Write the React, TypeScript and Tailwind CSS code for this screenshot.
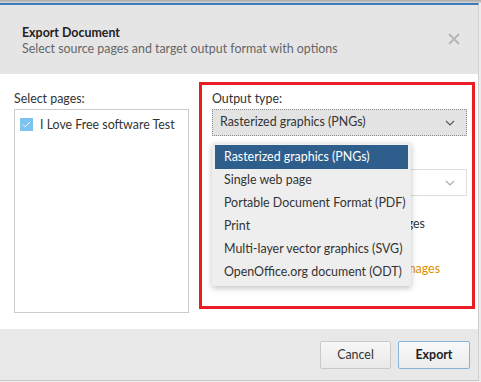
import React from 'react';

const font = { fontFamily: 'Lato, "Noto Sans", sans-serif' };

const formats = [
  'Rasterized graphics (PNGs)',
  'Single web page',
  'Portable Document Format (PDF)',
  'Print',
  'Multi-layer vector graphics (SVG)',
  'OpenOffice.org document (ODT)',
];

const Chevron: React.FC<{ color?: string }> = ({ color = '#555' }) => (
  <svg width="10" height="6" viewBox="0 0 10 6" fill="none">
    <path d="M1 1l4 4 4-4" stroke={color} strokeWidth="1.1" />
  </svg>
);

export default function App() {
  return (
    <div
      className="w-[481px] h-[382px] relative overflow-hidden bg-[#ececec] text-[12.4px] text-[#333] whitespace-nowrap"
      style={font}
    >
      {/* top shadow */}
      <div className="h-[3px] bg-gradient-to-b from-[#a9a9a9] to-[#d4d4d4]" />

      <div className="w-[479px] flex flex-col border-t-2 border-[#3c7bbd] border-r border-r-[#cfcfcf]">
        {/* Header */}
        <div className="h-[69px] bg-[#e5e5e5] flex items-start justify-between pl-[22px] pr-[18px] pt-[20px]">
          <div className="leading-[16px]">
            <div className="font-bold text-[#222]">Export Document</div>
            <div className="text-[#666]">Select source pages and target output format with options</div>
          </div>
          <svg width="12" height="12" viewBox="0 0 12 12" className="mt-[8px]">
            <path d="M1 1l10 10M11 1L1 11" stroke="#b5b5b5" strokeWidth="1.8" />
          </svg>
        </div>

        {/* Body */}
        <div className="h-[255px] bg-white flex pl-[14px] pt-[8px]">
          <div className="w-[175px] flex flex-col pt-[8px]">
            <div className="leading-[17px] mb-[2px]">Select pages:</div>
            <div className="h-[204px] border border-[#cccccc] px-[5px] pt-[6px]">
              <div className="flex items-center gap-[7px] leading-[17px]">
                <span className="w-[13px] h-[13px] bg-[#7ac4ef] flex items-center justify-center">
                  <svg width="9" height="7" viewBox="0 0 9 7">
                    <path d="M1 3.5l2.3 2.3L8 1" stroke="#fff" strokeWidth="1" fill="none" />
                  </svg>
                </span>
                <span>I Love Free software Test</span>
              </div>
            </div>
          </div>

          <div className="ml-[10px] w-[276px] h-[227px] border-[3px] border-[#ea1c24] pl-[10px] pr-[5px] pt-[5px] flex flex-col">
            <div className="leading-[17px] mb-[2px]">Output type:</div>
            <div className="h-[27px] bg-[#e3e3e3] border border-dotted border-[#8a8a8a] flex items-center justify-between pl-[7px] pr-[11px]">
              <span>Rasterized graphics (PNGs)</span>
              <Chevron />
            </div>
            <div className="leading-[17px] mt-[12px] mb-[4px] text-[#333]">Options:</div>
            <div className="h-[27px] bg-white border border-[#e0e0e0] flex items-center justify-end pr-[11px]">
              <Chevron color="#aaa" />
            </div>
            <div className="mt-[19px] w-[213px] flex items-center justify-end gap-[7px] leading-[17px]">
              <span className="w-[13px] h-[13px] border border-[#999]" />
              <span>Use separate pages as images</span>
            </div>
            <div className="mt-[28px] w-[228px] flex justify-end leading-[17px] text-[#e08e00]">
              Options for rendered images
            </div>
          </div>
        </div>

        {/* Footer */}
        <div className="h-[52px] bg-[#e8e8e8] border-b border-[#c8c8c8] flex items-start justify-end gap-[7px] pr-[8px] pt-[12px]">
          <button className="w-[71px] h-[28px] bg-gradient-to-b from-[#f7f7f7] to-[#e9e9e9] border border-[#c9c9c9] rounded-[2px] text-[#333]">
            Cancel
          </button>
          <button className="w-[72px] h-[28px] bg-gradient-to-b from-[#f9f9f9] to-[#ececec] border border-[#86b5dc] rounded-[2px] font-bold text-[#222]">
            Export
          </button>
        </div>
      </div>

      {/* Open dropdown menu */}
      <div className="absolute left-[212px] top-[143px] w-[199px] bg-[#eeeeee] shadow-[0_2px_6px_rgba(0,0,0,0.25)] py-[2px] px-[3px]">
        {formats.map((f, i) => (
          <div
            key={f}
            className={
              i === 0
                ? 'h-[24px] flex items-center px-[9px] bg-[#2e5e8b] text-white'
                : 'h-[23px] flex items-center px-[9px] text-[#333]'
            }
          >
            {f}
          </div>
        ))}
      </div>
    </div>
  );
}
